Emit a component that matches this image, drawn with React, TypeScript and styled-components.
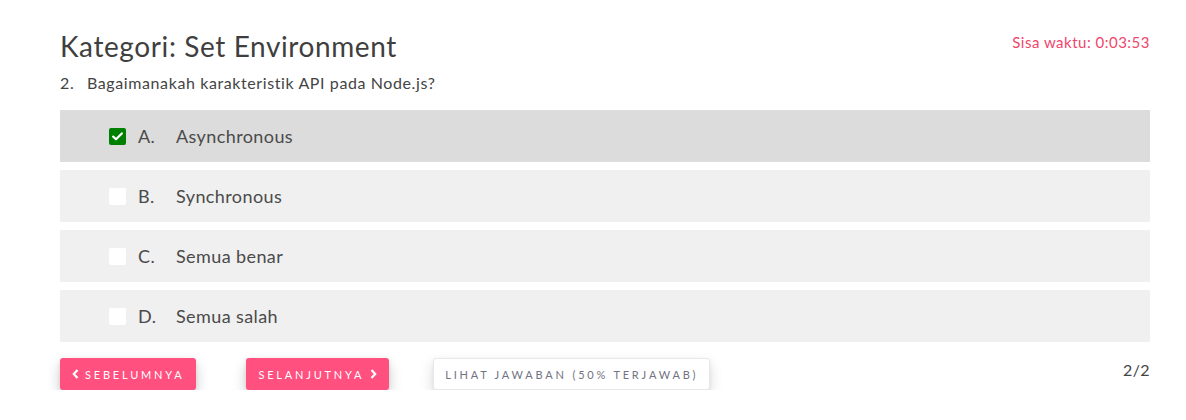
import React from "react";
import styled, { createGlobalStyle } from "styled-components";

const Global = createGlobalStyle`
  html, body { margin: 0; padding: 0; background: #fff; }
  body { font-family: "Lato", "Noto Sans", sans-serif; color: #444; }
`;

const Page = styled.div`
  padding: 29px 36px 0 60px;
`;

const Header = styled.div`
  display: flex;
  justify-content: space-between;
  align-items: flex-start;
`;

const Title = styled.h1`
  margin: 0;
  font-size: 28px;
  font-weight: 400;
  line-height: 34px;
  letter-spacing: 0.6px;
  color: #3f3f3f;
`;

const Timer = styled.div`
  font-size: 15px;
  line-height: 24px;
  letter-spacing: 0.5px;
  color: #f0466b;
  margin-top: 1px;
`;

const Question = styled.div`
  display: flex;
  font-size: 16px;
  line-height: 20px;
  letter-spacing: 0.6px;
  margin-top: 10px;
  color: #444;
`;

const QNum = styled.span`
  width: 27px;
`;

const Options = styled.div`
  display: flex;
  flex-direction: column;
  gap: 8px;
  margin-top: 17px;
`;

const Option = styled.div<{ $active?: boolean }>`
  display: flex;
  align-items: center;
  height: 52px;
  padding-left: 49px;
  background: ${(p) => (p.$active ? "#dcdcdc" : "#f0f0f0")};
  font-size: 18px;
  letter-spacing: 0.4px;
  color: #4a4a4a;
`;

const Box = styled.span<{ $checked?: boolean }>`
  width: 17px;
  height: 17px;
  border-radius: 2px;
  background: ${(p) => (p.$checked ? "#008000" : "#fff")};
  display: inline-flex;
  align-items: center;
  justify-content: center;
  margin-right: 12px;
`;

const Letter = styled.span`
  width: 38px;
`;

const Footer = styled.div`
  display: flex;
  align-items: center;
  margin-top: 16px;
`;

const PinkButton = styled.button<{ $gap: number }>`
  display: inline-flex;
  align-items: center;
  gap: 6px;
  height: 32px;
  padding: 0 12px;
  margin-right: ${(p) => p.$gap}px;
  border: none;
  border-radius: 3px;
  background: #ff5080;
  color: #fff;
  font-family: inherit;
  font-size: 11px;
  font-weight: 400;
  letter-spacing: 2.8px;
  box-shadow: 0 6px 14px rgba(0, 0, 0, 0.2), 0 2px 4px rgba(0, 0, 0, 0.08);
`;

const GhostButton = styled.button`
  height: 32px;
  padding: 0 11px;
  border: 1px solid #e8e8e8;
  border-radius: 3px;
  background: #fff;
  color: #727282;
  font-family: inherit;
  font-size: 11px;
  letter-spacing: 2.8px;
  box-shadow: 0 6px 14px rgba(0, 0, 0, 0.15), 0 2px 4px rgba(0, 0, 0, 0.06);
`;

const Pager = styled.div`
  margin-left: auto;
  font-size: 16px;
  letter-spacing: 0.4px;
  color: #444;
  margin-top: -10px;
`;

const Check = () => (
  <svg width="11" height="9" viewBox="0 0 11 9">
    <path d="M1.2 4.6 L4 7.3 L9.8 1.4" stroke="#fff" strokeWidth="2.2" fill="none" strokeLinecap="round" strokeLinejoin="round" />
  </svg>
);

const Chevron = ({ dir }: { dir: "left" | "right" }) => (
  <svg width="7" height="10" viewBox="0 0 7 10">
    <path
      d={dir === "left" ? "M5.5 1 L1.8 5 L5.5 9" : "M1.5 1 L5.2 5 L1.5 9"}
      stroke="#fff"
      strokeWidth="2.2"
      fill="none"
    />
  </svg>
);

const options = [
  { l: "A.", t: "Asynchronous", c: true },
  { l: "B.", t: "Synchronous", c: false },
  { l: "C.", t: "Semua benar", c: false },
  { l: "D.", t: "Semua salah", c: false },
];

export default function App() {
  return (
    <>
      <Global />
      <Page>
        <Header>
          <Title>Kategori: Set Environment</Title>
          <Timer>Sisa waktu: 0:03:53</Timer>
        </Header>
        <Question>
          <QNum>2.</QNum>
          <span>Bagaimanakah karakteristik API pada Node.js?</span>
        </Question>
        <Options>
          {options.map((o) => (
            <Option key={o.l} $active={o.c}>
              <Box $checked={o.c}>{o.c && <Check />}</Box>
              <Letter>{o.l}</Letter>
              <span>{o.t}</span>
            </Option>
          ))}
        </Options>
        <Footer>
          <PinkButton $gap={50}>
            <Chevron dir="left" />
            SEBELUMNYA
          </PinkButton>
          <PinkButton $gap={44}>
            SELANJUTNYA
            <Chevron dir="right" />
          </PinkButton>
          <GhostButton>LIHAT JAWABAN (50% TERJAWAB)</GhostButton>
          <Pager>2/2</Pager>
        </Footer>
      </Page>
    </>
  );
}
